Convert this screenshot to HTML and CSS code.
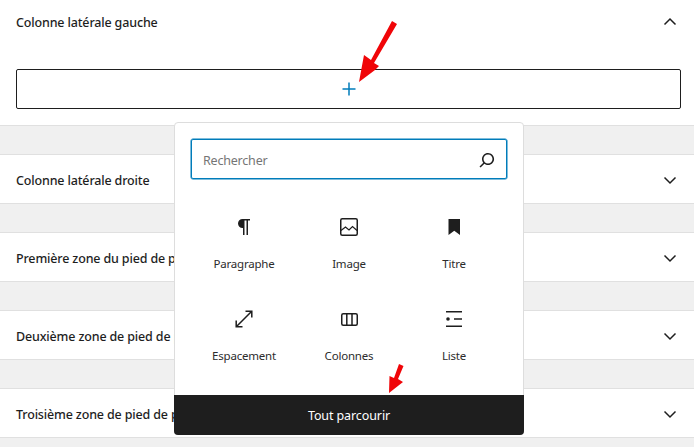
FILE: index.html
```html
<!DOCTYPE html>
<html lang="fr">
<head>
<meta charset="utf-8">
<title>Widgets</title>
<link rel="stylesheet" href="styles.css">
</head>
<body>
<div class="page">
  <section class="panel panel-open">
    <div class="head">
      <h2>Colonne latérale gauche</h2>
      <svg class="chev" viewBox="0 0 24 24" width="24" height="24"><path d="M6.500 14.500 12 9l5.500 5.500" fill="none" stroke="#1e1e1e" stroke-width="1.500"/></svg>
    </div>
    <div class="appender">
      <svg viewBox="0 0 24 24" width="24" height="24"><path d="M12 5.500v13M5.500 12h13" fill="none" stroke="#007cba" stroke-width="1.500"/></svg>
    </div>
  </section>
  <section class="panel">
    <div class="head"><h2>Colonne latérale droite</h2><svg class="chev" viewBox="0 0 24 24" width="24" height="24"><path d="M6.500 9.500 12 15l5.500-5.500" fill="none" stroke="#1e1e1e" stroke-width="1.500"/></svg></div>
  </section>
  <section class="panel">
    <div class="head"><h2>Première zone du pied de page</h2><svg class="chev" viewBox="0 0 24 24" width="24" height="24"><path d="M6.500 9.500 12 15l5.500-5.500" fill="none" stroke="#1e1e1e" stroke-width="1.500"/></svg></div>
  </section>
  <section class="panel">
    <div class="head"><h2>Deuxième zone de pied de page</h2><svg class="chev" viewBox="0 0 24 24" width="24" height="24"><path d="M6.500 9.500 12 15l5.500-5.500" fill="none" stroke="#1e1e1e" stroke-width="1.500"/></svg></div>
  </section>
  <section class="panel">
    <div class="head"><h2>Troisième zone de pied de page</h2><svg class="chev" viewBox="0 0 24 24" width="24" height="24"><path d="M6.500 9.500 12 15l5.500-5.500" fill="none" stroke="#1e1e1e" stroke-width="1.500"/></svg></div>
  </section>

  <div class="popover">
    <div class="search">
      <span class="placeholder">Rechercher</span>
      <svg viewBox="0 0 24 24" width="24" height="24"><path d="M13 5c-3.300 0-6 2.700-6 6 0 1.400.5 2.700 1.300 3.700l-3.800 3.800 1.100 1.100 3.800-3.800c1 .8 2.300 1.300 3.700 1.300 3.300 0 6-2.700 6-6S16.300 5 13 5zm0 10.500c-2.500 0-4.500-2-4.500-4.500s2-4.500 4.500-4.500 4.500 2 4.500 4.500-2 4.500-4.500 4.500z" fill="#1e1e1e"/></svg>
    </div>
    <div class="grid">
      <div class="item">
        <svg viewBox="0 0 24 24" width="24" height="24"><path d="M18 4H10.500C8 4 6 6 6 8.500S8 13 10.500 13H11v7h1.500V5.500h2V20H16V5.500h2V4Z" fill="#1e1e1e"/></svg>
        <span>Paragraphe</span>
      </div>
      <div class="item">
        <svg viewBox="0 0 24 24" width="24" height="24"><rect x="3.750" y="3.750" width="16.500" height="16.500" rx="1.500" fill="none" stroke="#1e1e1e" stroke-width="1.500"/><path d="M4 15.500 8.500 12l3.500 3 3.500-3.500 4.500 4" fill="none" stroke="#1e1e1e" stroke-width="1.200"/></svg>
        <span>Image</span>
      </div>
      <div class="item">
        <svg viewBox="0 0 24 24" width="24" height="24"><path d="M6.500 4h11.500v16l-5.750-4.200L6.500 20V4Z" fill="#1e1e1e"/></svg>
        <span>Titre</span>
      </div>
      <div class="item">
        <svg viewBox="0 0 24 24" width="24" height="24"><path d="M13.500 4.200h6.300v6.300M19.500 4.500 4.500 19.500M4.200 13.500v6.300h6.300" fill="none" stroke="#1e1e1e" stroke-width="1.500"/></svg>
        <span>Espacement</span>
      </div>
      <div class="item">
        <svg viewBox="0 0 24 24" width="24" height="24"><rect x="4.750" y="6.750" width="15.500" height="11.500" rx="1.500" fill="none" stroke="#1e1e1e" stroke-width="1.500"/><path d="M9.800 7v11M15 7v11" stroke="#1e1e1e" stroke-width="1.500"/></svg>
        <span>Colonnes</span>
      </div>
      <div class="item">
        <svg viewBox="0 0 24 24" width="24" height="24"><path d="M4 4.750h16M4 19.250h16M12 12h8" stroke="#1e1e1e" stroke-width="1.500"/><circle cx="6" cy="12" r="1.800" fill="#1e1e1e"/></svg>
        <span>Liste</span>
      </div>
    </div>
    <div class="browse">Tout parcourir</div>
  </div>

  <svg class="arrows" viewBox="0 0 694 447" width="694" height="447">
    <path d="M397 24 392 21 371 60 364 55 359 82 375 70 379 66 374 63Z" fill="#f00508"/>
    <path d="M403.500 366 399 364 394 378 389.500 376 389 393 403 382 398 379Z" fill="#f00508"/>
  </svg>
</div>
</body>
</html>
```
FILE: styles.css
```css
* { box-sizing: border-box; }
html, body { margin: 0; padding: 0; }
body {
  width: 694px;
  height: 447px;
  overflow: hidden;
  background: #f0f0f0;
  font-family: "Noto Sans", "Open Sans", sans-serif;
  color: #1e1e1e;
}
.page {
  position: relative;
  width: 694px;
  height: 447px;
  overflow: hidden;
  display: flex;
  flex-direction: column;
  gap: 28px;
}
.panel {
  background: #fff;
  border-top: 1px solid #e0e0e0;
  border-bottom: 1px solid #e0e0e0;
  flex: none;
}
.panel-open {
  border-top: 0;
  height: 126px;
  padding-bottom: 16px;
}
.head {
  height: 48px;
  padding: 2px 12px 0 16px;
  display: flex;
  align-items: center;
  justify-content: space-between;
}
.panel-open .head {
  height: 43px;
  padding-top: 0;
}
h2 {
  margin: 2px 0 0;
  font-size: 12.500px;
  letter-spacing: -0.150px;
  font-weight: 500;
  line-height: 20px;
  white-space: nowrap;
}
.chev { flex: none; }
.appender {
  margin: 26px 13px 0 16px;
  height: 40px;
  border: 1px solid #1e1e1e;
  border-radius: 2px;
  display: flex;
  align-items: center;
  justify-content: center;
}
.popover {
  position: absolute;
  left: 174px;
  top: 122px;
  width: 350px;
  height: 313px;
  background: #fff;
  border: 1px solid #ddd;
  border-radius: 4px;
  display: flex;
  flex-direction: column;
}
.search {
  flex: none;
  margin: 16px 16px 0 16px;
  height: 40px;
  border: 1px solid #007cba;
  box-shadow: 0 0 0 0.500px #007cba;
  border-radius: 2px;
  padding: 2px 7px 0 11px;
  display: flex;
  align-items: center;
  justify-content: space-between;
}
.placeholder {
  font-size: 12.500px;
  letter-spacing: -0.200px;
  color: #757575;
}
.grid {
  flex: 1;
  min-height: 0;
  display: grid;
  grid-template-columns: repeat(3, 105px);
  grid-template-rows: 92px 1fr;
  padding: 36px 0 0 16px;
}
.item {
  display: flex;
  flex-direction: column;
  align-items: center;
  font-size: 11.500px;
  letter-spacing: -0.200px;
  line-height: 16px;
  color: #2c2c2c;
  gap: 17px;
}
.item svg { flex: none; }
.item span { padding-left: 1px; }
.browse {
  flex: none;
  height: 40px;
  margin: 0 -1px -1px;
  background: #1e1e1e;
  color: #fff;
  border-radius: 0 0 4px 4px;
  display: flex;
  align-items: center;
  justify-content: center;
  font-size: 12.500px;
  letter-spacing: -0.100px;
  font-weight: 400;
}
.arrows {
  position: absolute;
  left: 0;
  top: 0;
  pointer-events: none;
}
```
